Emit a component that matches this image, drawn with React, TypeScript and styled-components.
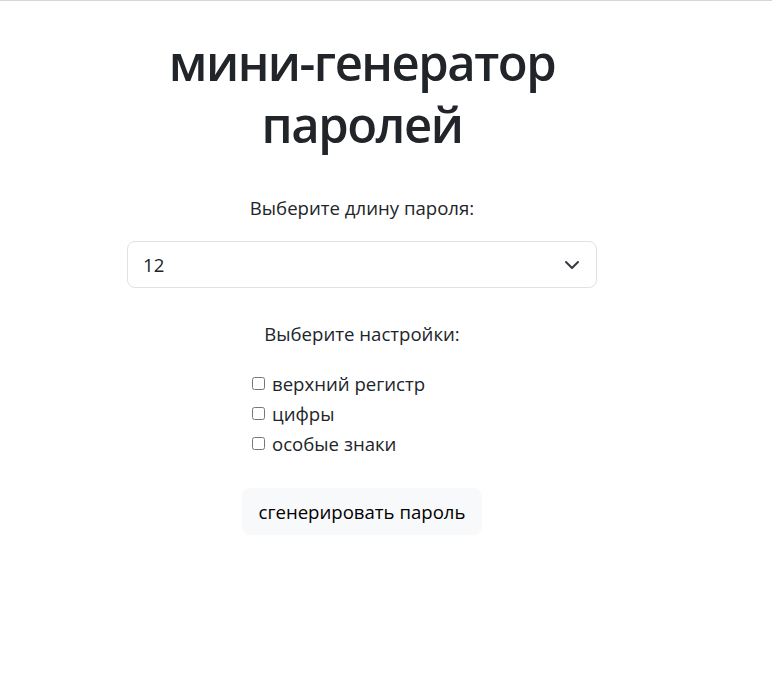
import React, { useState } from "react";
import styled, { createGlobalStyle } from "styled-components";

const Global = createGlobalStyle`
  html, body { margin: 0; padding: 0; background: #fff; }
  body {
    font-family: "Open Sans", "Noto Sans", sans-serif;
    color: #212529;
    border-top: 1px solid #d6d6d6;
  }
  * { box-sizing: border-box; }
`;

const Page = styled.main`
  width: 470px;
  margin-left: 127px;
  display: flex;
  flex-direction: column;
  align-items: stretch;
  text-align: center;
`;

const Title = styled.h1`
  margin: 30px 0 38px;
  font-size: 49px;
  line-height: 62px;
  font-weight: 600;
  letter-spacing: -1.5px;
`;

const Label = styled.label<{ $mt?: number }>`
  display: block;
  font-size: 18.6px;
  line-height: 30px;
  margin: ${(p) => p.$mt ?? 0}px 0 0;
`;

const SelectWrap = styled.div`
  position: relative;
  margin-top: 18px;
`;

const Select = styled.select`
  width: 100%;
  height: 47px;
  appearance: none;
  -webkit-appearance: none;
  border: 1px solid #dee2e6;
  border-radius: 8px;
  padding: 0 48px 0 15px;
  font-family: inherit;
  font-size: 18.6px;
  color: #212529;
  background: #fff;
  outline: none;
`;

const Chevron = styled.svg`
  position: absolute;
  right: 17px;
  top: 50%;
  width: 16px;
  height: 16px;
  transform: translateY(-50%);
  pointer-events: none;
`;

const Options = styled.div`
  margin-top: 20px;
  padding-left: 124px;
  display: flex;
  flex-direction: column;
  align-items: flex-start;
`;

const CheckRow = styled.label`
  display: flex;
  align-items: center;
  font-size: 18.6px;
  line-height: 30px;
  cursor: pointer;
`;

const Check = styled.input`
  width: 13px;
  height: 13px;
  margin: 0 7px 0 1px;
  position: relative;
  top: -1px;
`;

const ButtonRow = styled.div`
  margin-top: 29px;
  display: flex;
  justify-content: center;
`;

const Button = styled.button`
  height: 47px;
  padding: 0 16px;
  border: 1px solid #f8f9fa;
  background: #f8f9fa;
  border-radius: 8px;
  font-family: inherit;
  font-size: 18.6px;
  color: #000;
  cursor: pointer;
`;

export default function App() {
  const [len, setLen] = useState("12");
  const lengths = Array.from({ length: 25 }, (_, i) => String(i + 6));
  return (
    <>
      <Global />
      <Page>
        <Title>
          мини-генератор
          <br />
          паролей
        </Title>
        <Label htmlFor="len">Выберите длину пароля:</Label>
        <SelectWrap>
          <Select id="len" value={len} onChange={(e) => setLen(e.target.value)}>
            {lengths.map((l) => (
              <option key={l} value={l}>
                {l}
              </option>
            ))}
          </Select>
          <Chevron viewBox="0 0 16 16">
            <path d="m2 5 6 6 6-6" fill="none" stroke="#343a40" strokeWidth="2" strokeLinecap="round" strokeLinejoin="round" />
          </Chevron>
        </SelectWrap>
        <Label $mt={31}>Выберите настройки:</Label>
        <Options>
          <CheckRow>
            <Check type="checkbox" />
            верхний регистр
          </CheckRow>
          <CheckRow>
            <Check type="checkbox" />
            цифры
          </CheckRow>
          <CheckRow>
            <Check type="checkbox" />
            особые знаки
          </CheckRow>
        </Options>
        <ButtonRow>
          <Button type="button">сгенерировать пароль</Button>
        </ButtonRow>
      </Page>
    </>
  );
}
